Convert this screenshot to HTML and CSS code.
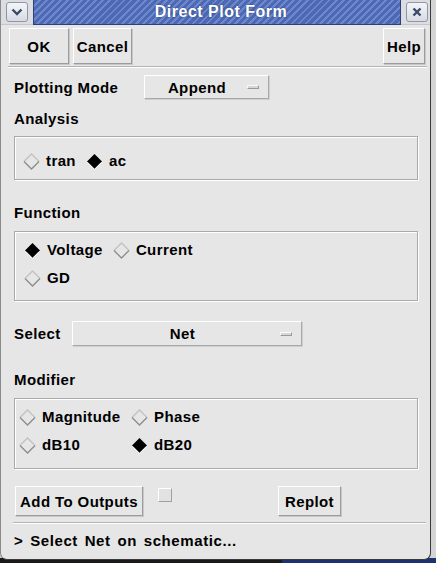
FILE: index.html
```html
<!DOCTYPE html>
<html>
<head>
<meta charset="utf-8">
<link rel="stylesheet" href="styles.css">
</head>
<body>
<div class="desk">
<div class="window">
  <div class="titlebar">
    <div class="tb-btn">
      <svg width="12" height="8" viewBox="0 0 12 8"><path d="M1.5 1.5 L6 6 L10.5 1.5" fill="none" stroke="#3a4a6a" stroke-width="2.4"/></svg>
    </div>
    <div class="title">Direct Plot Form</div>
    <div class="tb-btn close">
      <svg width="10" height="10" viewBox="0 0 10 10"><path d="M1.5 1.5 L8.5 8.5 M8.5 1.5 L1.5 8.5" fill="none" stroke="#3a4a6a" stroke-width="2.4"/></svg>
    </div>
  </div>
  <div class="content">
    <div class="toolbar">
      <div class="btn ok">OK</div>
      <div class="btn cancel">Cancel</div>
      <div class="spacer"></div>
      <div class="btn help">Help</div>
    </div>
    <div class="sep top-sep"></div>
    <div class="form">
      <div class="row mode-row">
        <span class="label">Plotting Mode</span>
        <div class="cyclic append"><span class="cy-text">Append</span><span class="ind"></span></div>
      </div>
      <div class="section-label first">Analysis</div>
      <div class="frame frame-analysis">
        <div class="opts">
          <span class="opt"><svg class="dia" width="17" height="17" viewBox="0 0 17 17"><path d="M1 8.5 L8.5 1 L16 8.5" fill="none" stroke="#c2c2c2" stroke-width="1.3"/><path d="M1 8.5 L8.5 16 L16 8.5" fill="none" stroke="#8c8c8c" stroke-width="1.3"/></svg>tran</span>
          <span class="opt"><svg class="dia" width="17" height="17" viewBox="0 0 17 17"><path d="M1 8.5 L8.5 1 L16 8.5 L8.5 16 Z" fill="#000"/><path d="M1.5 9.3 L8.5 16.3 L15.5 9.3" fill="none" stroke="#fff" stroke-width="1"/></svg>ac</span>
        </div>
      </div>
      <div class="section-label">Function</div>
      <div class="frame frame-func">
        <div class="opts">
          <span class="opt"><svg class="dia" width="17" height="17" viewBox="0 0 17 17"><path d="M1 8.5 L8.5 1 L16 8.5 L8.5 16 Z" fill="#000"/><path d="M1.5 9.3 L8.5 16.3 L15.5 9.3" fill="none" stroke="#fff" stroke-width="1"/></svg>Voltage</span>
          <span class="opt"><svg class="dia" width="17" height="17" viewBox="0 0 17 17"><path d="M1 8.5 L8.5 1 L16 8.5" fill="none" stroke="#c2c2c2" stroke-width="1.3"/><path d="M1 8.5 L8.5 16 L16 8.5" fill="none" stroke="#8c8c8c" stroke-width="1.3"/></svg>Current</span>
        </div>
        <div class="opts">
          <span class="opt"><svg class="dia" width="17" height="17" viewBox="0 0 17 17"><path d="M1 8.5 L8.5 1 L16 8.5" fill="none" stroke="#c2c2c2" stroke-width="1.3"/><path d="M1 8.5 L8.5 16 L16 8.5" fill="none" stroke="#8c8c8c" stroke-width="1.3"/></svg>GD</span>
        </div>
      </div>
      <div class="row select-row">
        <span class="label">Select</span>
        <div class="cyclic net"><span class="cy-text">Net</span><span class="ind"></span></div>
      </div>
      <div class="section-label mod">Modifier</div>
      <div class="frame frame-mod">
        <div class="grid">
          <span class="opt"><svg class="dia" width="17" height="17" viewBox="0 0 17 17"><path d="M1 8.5 L8.5 1 L16 8.5" fill="none" stroke="#c2c2c2" stroke-width="1.3"/><path d="M1 8.5 L8.5 16 L16 8.5" fill="none" stroke="#8c8c8c" stroke-width="1.3"/></svg>Magnitude</span>
          <span class="opt"><svg class="dia" width="17" height="17" viewBox="0 0 17 17"><path d="M1 8.5 L8.5 1 L16 8.5" fill="none" stroke="#c2c2c2" stroke-width="1.3"/><path d="M1 8.5 L8.5 16 L16 8.5" fill="none" stroke="#8c8c8c" stroke-width="1.3"/></svg>Phase</span>
          <span class="opt"><svg class="dia" width="17" height="17" viewBox="0 0 17 17"><path d="M1 8.5 L8.5 1 L16 8.5" fill="none" stroke="#c2c2c2" stroke-width="1.3"/><path d="M1 8.5 L8.5 16 L16 8.5" fill="none" stroke="#8c8c8c" stroke-width="1.3"/></svg>dB10</span>
          <span class="opt"><svg class="dia" width="17" height="17" viewBox="0 0 17 17"><path d="M1 8.5 L8.5 1 L16 8.5 L8.5 16 Z" fill="#000"/><path d="M1.5 9.3 L8.5 16.3 L15.5 9.3" fill="none" stroke="#fff" stroke-width="1"/></svg>dB20</span>
        </div>
      </div>
      <div class="row bottom-row">
        <div class="btn add">Add To Outputs</div>
        <span class="check"></span>
        <div class="btn replot">Replot</div>
      </div>
    </div>
    <div class="sep bottom-sep"></div>
    <div class="status">&gt; Select Net on schematic...</div>
  </div>
</div>
</div>
</body>
</html>
```

FILE: styles.css
```css
html, body {
  margin: 0;
  padding: 0;
}
body {
  width: 436px;
  height: 563px;
  overflow: hidden;
  background: #d4d4d4;
  font-family: "Liberation Sans", Arial, sans-serif;
  font-weight: bold;
  font-size: 15px;
  letter-spacing: 0.4px;
  color: #000;
}
.desk {
  width: 436px;
  height: 563px;
  background:
    linear-gradient(to right, #1a1a1a 0, #1a1a1a 282px, #1e3270 282px) bottom / 100% 5px no-repeat,
    #d4d4d4;
}
.window {
  width: 431px;
  height: 560px;
  box-sizing: border-box;
  background: #e6e6e6;
  border: 1px solid #3a3a3a;
  border-left-color: #8a8a8a;
  border-top: none;
  border-radius: 0 0 7px 7px;
  overflow: hidden;
  display: flex;
  flex-direction: column;
}
.titlebar {
  height: 25px;
  display: flex;
  align-items: center;
  background: #dcdde2;
  border-bottom: 1px solid #c4c6cc;
  box-sizing: border-box;
}
.tb-btn {
  width: 22px;
  height: 20px;
  margin: 0 5px 0 5px;
  border: 1px solid #8e96aa;
  border-radius: 3px;
  background: linear-gradient(#f4f5f8, #d8dbe3);
  display: flex;
  align-items: center;
  justify-content: center;
  box-sizing: border-box;
}
.tb-btn.close {
  margin: 0 2px 0 5px;
}
.title {
  flex: 1;
  height: 25px;
  box-sizing: border-box;
  border: 1px solid #2c3f78;
  border-top: none;
  background: repeating-linear-gradient(135deg, #4d69b4 0px, #4d69b4 3px, #6d88cc 3px, #6d88cc 5px);
  color: #fff;
  font-size: 16px;
  letter-spacing: 0.5px;
  text-align: center;
  line-height: 24px;
  text-shadow: 0 0 2px #2a3d78;
  padding-left: 8px;
}
.content {
  flex: 1;
  display: flex;
  flex-direction: column;
}
.btn {
  box-sizing: border-box;
  background: #e6e6e6;
  border: 1px solid;
  border-color: #ffffff #9c9c9c #9c9c9c #ffffff;
  box-shadow: 1px 1px 0 #c8c8c8;
  display: flex;
  align-items: center;
  justify-content: center;
}
.toolbar {
  display: flex;
  margin-top: 3px;
  padding: 0 5px 0 8px;
  gap: 4px;
  height: 36px;
}
.toolbar .btn {
  height: 36px;
}
.ok { width: 60px; }
.cancel { width: 59px; }
.help { width: 42px; }
.spacer { flex: 1; }
.sep {
  height: 0;
  border-top: 1px solid #b4b4b4;
  border-bottom: 1px solid #ffffff;
}
.top-sep {
  margin: 2px 3px 0 7px;
}
.form {
  padding-left: 13px;
  display: flex;
  flex-direction: column;
}
.row {
  display: flex;
  align-items: center;
}
.mode-row {
  margin-top: 7px;
  height: 24px;
}
.mode-row .label {
  width: 130px;
}
.cyclic {
  box-sizing: border-box;
  height: 24px;
  background: #e6e6e6;
  border: 1px solid;
  border-color: #ffffff #a8a8a8 #a8a8a8 #ffffff;
  box-shadow: 1px 1px 0 #cfcfcf;
  display: flex;
  align-items: center;
}
.cy-text {
  flex: 1;
  text-align: center;
}
.ind {
  width: 12px;
  height: 4px;
  box-sizing: border-box;
  border: 1px solid;
  border-color: #fafafa #9a9a9a #9a9a9a #fafafa;
  background: #d6d6d6;
}
.append {
  width: 125px;
  padding: 0 9px 0 0;
}
.append .cy-text {
  padding-left: 2px;
}
.section-label {
  height: 18px;
  line-height: 18px;
  margin-top: 24px;
}
.section-label.first {
  margin-top: 11px;
}
.section-label.mod {
  margin-top: 25px;
}
.frame {
  width: 404px;
  box-sizing: border-box;
  margin-top: 9px;
  border: 1px solid #a9a9a9;
  box-shadow: inset 1px 1px 0 #ffffff, 1px 1px 0 #ffffff;
}
.frame-analysis {
  margin-top: 8px;
  height: 44px;
  padding: 15px 0 0 8px;
}
.frame-func {
  height: 70px;
  padding: 9px 0 0 9px;
  display: flex;
  flex-direction: column;
  gap: 10px;
}
.frame-mod {
  height: 71px;
  padding: 9px 0 0 4px;
}
.opts {
  display: flex;
  gap: 10px;
  height: 18px;
  align-items: center;
}
.opt {
  display: inline-flex;
  align-items: center;
  height: 18px;
  line-height: 18px;
}
.dia {
  margin-right: 6px;
  flex: none;
}
.grid {
  display: grid;
  grid-template-columns: 112px auto;
  row-gap: 10px;
}
.select-row {
  margin-top: 20px;
  height: 25px;
}
.select-row .label {
  width: 58px;
}
.net {
  width: 230px;
  height: 25px;
  padding-right: 9px;
}
.net .cy-text {
  padding-left: 12px;
}
.bottom-row {
  margin-top: 17px;
  height: 30px;
}
.add {
  width: 128px;
  height: 30px;
  margin-left: 1px;
}
.check {
  width: 14px;
  height: 14px;
  box-sizing: border-box;
  margin: 0 0 13px 15px;
  border: 1px solid;
  border-color: #ffffff #a0a0a0 #a0a0a0 #ffffff;
  background: #e2e2e2;
}
.replot {
  width: 63px;
  height: 30px;
  margin-left: 106px;
}
.bottom-sep {
  margin: 6px 4px 0 12px;
}
.status {
  margin-top: 8px;
  height: 18px;
  line-height: 18px;
  padding-left: 13px;
  letter-spacing: 0.6px;
  word-spacing: 2px;
}
```
